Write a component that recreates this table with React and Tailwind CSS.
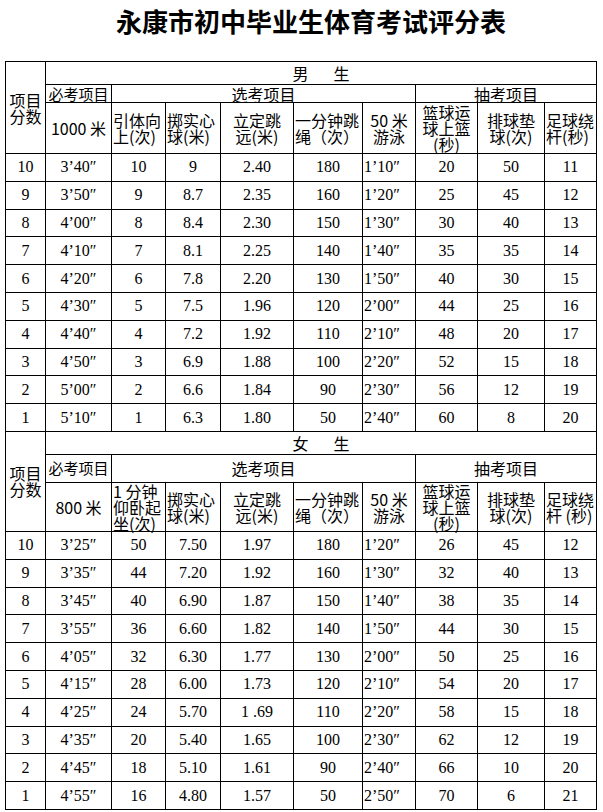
import React from 'react';

const male = [
  ['10', '3’40″', '10', '9', '2.40', '180', '1’10″', '20', '50', '11'],
  ['9', '3’50″', '9', '8.7', '2.35', '160', '1’20″', '25', '45', '12'],
  ['8', '4’00″', '8', '8.4', '2.30', '150', '1’30″', '30', '40', '13'],
  ['7', '4’10″', '7', '8.1', '2.25', '140', '1’40″', '35', '35', '14'],
  ['6', '4’20″', '6', '7.8', '2.20', '130', '1’50″', '40', '30', '15'],
  ['5', '4’30″', '5', '7.5', '1.96', '120', '2’00″', '44', '25', '16'],
  ['4', '4’40″', '4', '7.2', '1.92', '110', '2’10″', '48', '20', '17'],
  ['3', '4’50″', '3', '6.9', '1.88', '100', '2’20″', '52', '15', '18'],
  ['2', '5’00″', '2', '6.6', '1.84', '90', '2’30″', '56', '12', '19'],
  ['1', '5’10″', '1', '6.3', '1.80', '50', '2’40″', '60', '8', '20'],
];

const female = [
  ['10', '3’25″', '50', '7.50', '1.97', '180', '1’20″', '26', '45', '12'],
  ['9', '3’35″', '44', '7.20', '1.92', '160', '1’30″', '32', '40', '13'],
  ['8', '3’45″', '40', '6.90', '1.87', '150', '1’40″', '38', '35', '14'],
  ['7', '3’55″', '36', '6.60', '1.82', '140', '1’50″', '44', '30', '15'],
  ['6', '4’05″', '32', '6.30', '1.77', '130', '2’00″', '50', '25', '16'],
  ['5', '4’15″', '28', '6.00', '1.73', '120', '2’10″', '54', '20', '17'],
  ['4', '4’25″', '24', '5.70', '1 .69', '110', '2’20″', '58', '15', '18'],
  ['3', '4’35″', '20', '5.40', '1.65', '100', '2’30″', '62', '12', '19'],
  ['2', '4’45″', '18', '5.10', '1.61', '90', '2’40″', '66', '10', '20'],
  ['1', '4’55″', '16', '4.80', '1.57', '50', '2’50″', '70', '6', '21'],
];

const cjk = { fontFamily: "'Noto Sans CJK SC', 'Liberation Sans', sans-serif" };
const td = 'border border-black p-0 align-middle';
const hd = 'border border-black p-0 align-middle text-[16px] leading-[16px] whitespace-nowrap';

function Section({ sex, run, pullup, midH, headH, rowH, rows, strip }) {
  return (
    <>
      <tr className="h-[23px]">
        <td rowSpan={3} style={cjk} className={`${td} text-center text-[16px] leading-[16px]`}>项目<br />分数</td>
        <td colSpan={9} style={cjk} className={`${td} text-center text-[16px] leading-[16px]`}>
          <span>{sex[0]}</span><span className="ml-[25px]">{sex[1]}</span>
        </td>
      </tr>
      <tr className={midH}>
        <td style={cjk} className={`${td} text-center text-[15px] leading-[16px] whitespace-nowrap`}>必考项目</td>
        <td colSpan={5} style={cjk} className={`${td} text-center text-[16px] leading-[16px]`}>选考项目</td>
        <td colSpan={3} style={cjk} className={`${td} text-center text-[16px] leading-[16px]`}>抽考项目</td>
      </tr>
      <tr className={headH}>
        <td style={cjk} className={`${hd} text-center`}>{run}</td>
        <td style={cjk} className={`${hd} text-left pl-[1px]`}>{pullup}</td>
        <td style={cjk} className={`${hd} text-left pl-[1px]`}>掷实心<br />球(米)</td>
        <td style={cjk} className={`${hd} text-center`}>立定跳<br />远(米)</td>
        <td style={cjk} className={`${hd} text-left pl-[1px]`}>一分钟跳<br />绳（次）</td>
        <td style={cjk} className={`${hd} text-center`}>50 米<br />游泳</td>
        <td style={cjk} className={`${hd} text-center`}>篮球运<br />球上篮<br />(秒)</td>
        <td style={cjk} className={`${hd} text-center`}>排球垫<br />球(次)</td>
        <td style={cjk} className={`${hd} text-left pl-[1px]`}>足球绕<br />{strip}</td>
      </tr>
      {rows.map((r) => (
        <tr key={r[0]} className={rowH}>
          {r.map((v, i) => (
            <td key={i} className={`${td} text-[16px] leading-[18px] whitespace-nowrap ${i === 6 ? 'text-left pl-[1px]' : 'text-center'}`}>
              {v}
            </td>
          ))}
        </tr>
      ))}
    </>
  );
}

export default function App() {
  return (
    <div className="w-[603px] h-[812px] bg-white text-black" style={{ fontFamily: "'Liberation Serif', 'Noto Sans CJK SC', serif" }}>
      <div className="h-[61px] pt-[6px] pl-[19px] text-center">
        <h1 className="text-[26px] leading-[30px] font-bold" style={cjk}>
          永康市初中毕业生体育考试评分表
        </h1>
      </div>
      <table className="ml-[5px] w-[592px] table-fixed border-collapse">
        <colgroup>
          <col className="w-[40px]" />
          <col className="w-[66px]" />
          <col className="w-[54px]" />
          <col className="w-[55px]" />
          <col className="w-[73px]" />
          <col className="w-[69px]" />
          <col className="w-[53px]" />
          <col className="w-[62px]" />
          <col className="w-[67px]" />
          <col className="w-[52px]" />
        </colgroup>
        <tbody>
          <Section
            sex={['男', '生']}
            run="1000 米"
            pullup={<>引体向<br />上(次)</>}
            strip="杆(秒)"
            midH="h-[18px]"
            headH="h-[51px]"
            rowH="h-[27.8px]"
            rows={male}
          />
          <Section
            sex={['女', '生']}
            run="800 米"
            pullup={<>1 分钟<br />仰卧起<br />坐(次)</>}
            strip="杆 (秒)"
            midH="h-[28px]"
            headH="h-[49px]"
            rowH="h-[27.8px]"
            rows={female}
          />
        </tbody>
      </table>
    </div>
  );
}
